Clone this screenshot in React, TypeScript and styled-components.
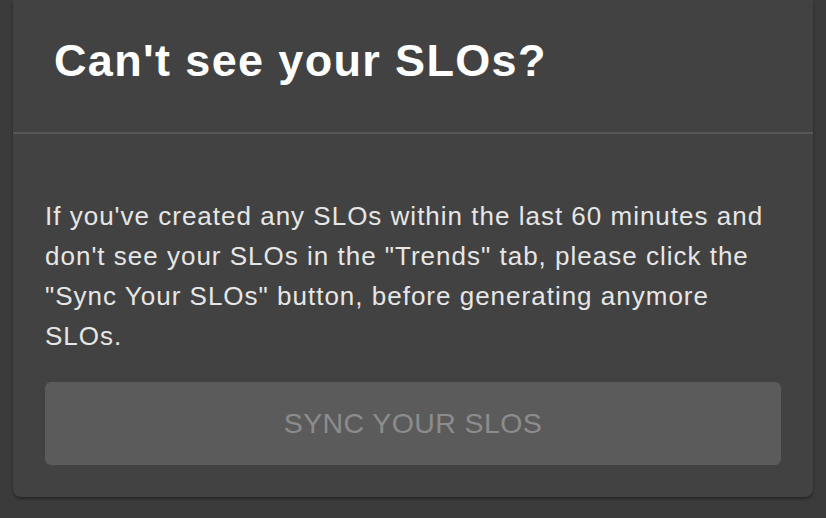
import React from "react";
import styled, { createGlobalStyle } from "styled-components";

const Global = createGlobalStyle`
  html, body {
    margin: 0;
    padding: 0;
    background: #3b3b3b;
    font-family: "Liberation Sans", Arial, Helvetica, sans-serif;
  }
`;

const Page = styled.div`
  width: 826px;
  height: 518px;
  overflow: hidden;
  padding: 0 13px;
  box-sizing: border-box;
`;

const Card = styled.div`
  background: #424242;
  border-radius: 0 0 8px 8px;
  box-shadow: 0 2px 3px rgba(0, 0, 0, 0.35);
  display: flex;
  flex-direction: column;
`;

const Header = styled.h2`
  margin: 0;
  padding: 26px 41px 36px;
  font-size: 45px;
  line-height: 70px;
  font-weight: 700;
  letter-spacing: 1.35px;
  color: #ffffff;
  border-bottom: 2px solid #565656;
`;

const Body = styled.div`
  padding: 62px 32px 32px;
  display: flex;
  flex-direction: column;
  gap: 26px;
`;

const Text = styled.p`
  margin: 0;
  font-size: 26px;
  line-height: 40px;
  letter-spacing: 1px;
  color: #e6e6e6;
`;

const SyncButton = styled.button`
  height: 83px;
  width: 100%;
  border: none;
  border-radius: 6px;
  background: #5b5b5b;
  color: #8c8c8c;
  font-family: inherit;
  font-size: 28.5px;
  letter-spacing: 0.4px;
  text-transform: uppercase;
  cursor: default;
`;

export default function App() {
  return (
    <Page>
      <Global />
      <Card>
        <Header>Can't see your SLOs?</Header>
        <Body>
          <Text>
            If you've created any SLOs within the last 60 minutes and don't see
            your SLOs in the "Trends" tab, please click the "Sync Your SLOs"
            button, before generating anymore SLOs.
          </Text>
          <SyncButton disabled>Sync Your SLOs</SyncButton>
        </Body>
      </Card>
    </Page>
  );
}
